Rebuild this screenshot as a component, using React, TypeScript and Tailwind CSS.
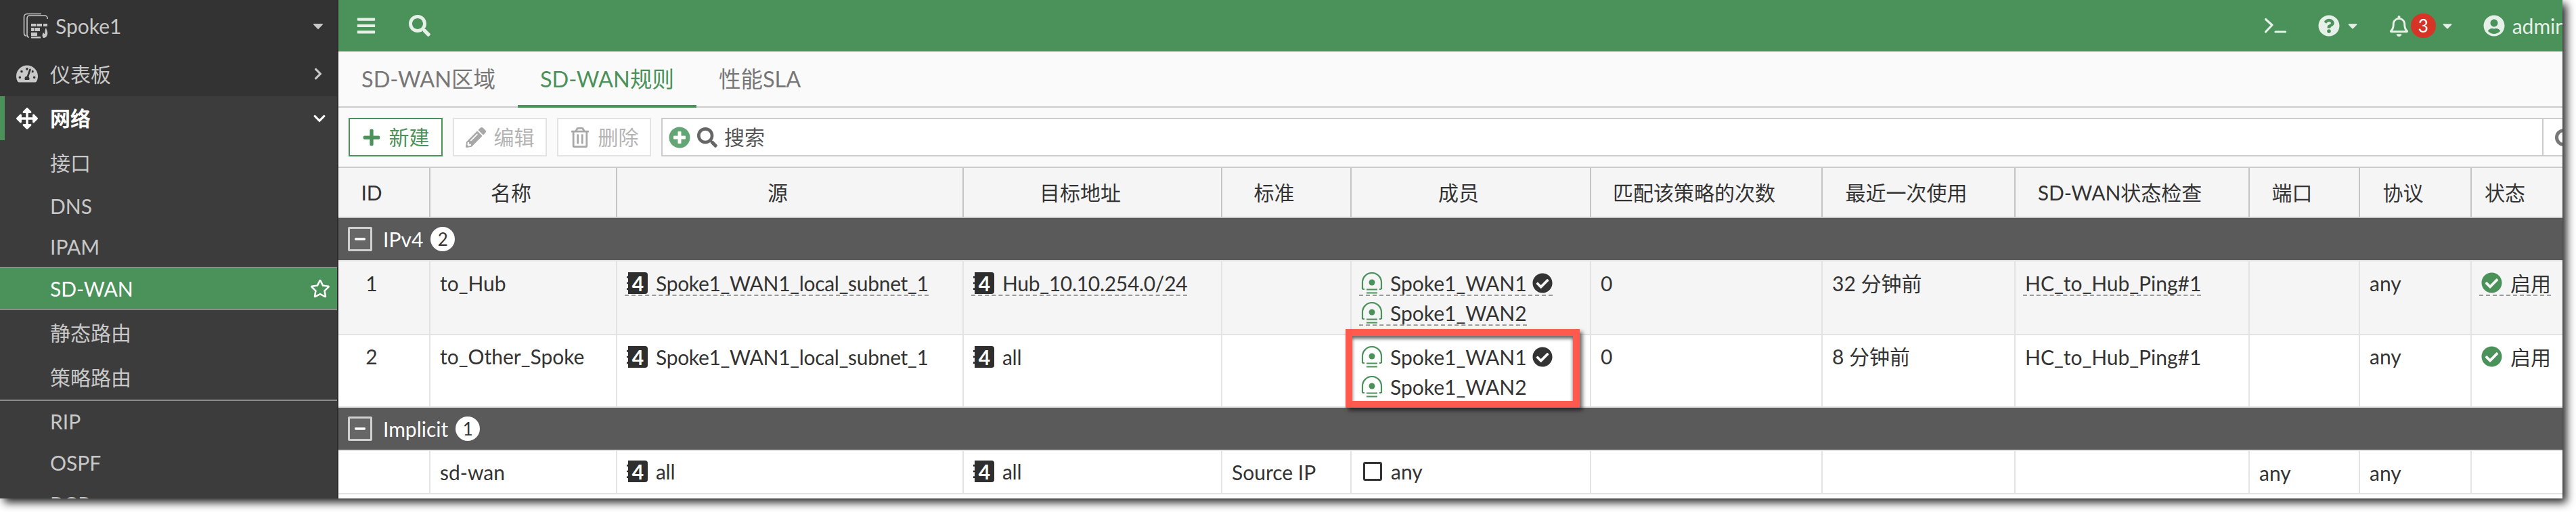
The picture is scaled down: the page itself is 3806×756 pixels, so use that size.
import type { ReactNode } from 'react';
import {
  FaArrowsAlt,
  FaBars,
  FaCaretDown,
  FaCheckCircle,
  FaChevronDown,
  FaChevronRight,
  FaMinus,
  FaPencilAlt,
  FaPlus,
  FaPlusCircle,
  FaQuestionCircle,
  FaRegBell,
  FaRegStar,
  FaRegTrashAlt,
  FaSearch,
  FaTachometerAlt,
  FaUserCircle,
} from 'react-icons/fa';

const columns = [
  { title: 'ID', width: 136 },
  { title: '名称', width: 276 },
  { title: '源', width: 512 },
  { title: '目标地址', width: 382 },
  { title: '标准', width: 191 },
  { title: '成员', width: 354 },
  { title: '匹配该策略的次数', width: 342 },
  { title: '最近一次使用', width: 285 },
  { title: 'SD-WAN状态检查', width: 346 },
  { title: '端口', width: 163 },
  { title: '协议', width: 165 },
  { title: '状态', width: 134 },
];

const DeviceIcon = () => (
  <svg viewBox="0 0 38 38" className="w-[38px] h-[38px] text-[#c8c8c8]" fill="none" stroke="currentColor" strokeWidth="1.6">
    <path d="M27 1.5H6a4.5 4.5 0 0 0-4.5 4.500V30a4 4 0 0 0 3 4" />
    <path d="M36 9V8a4 4 0 0 0-4-4H10a4 4 0 0 0-4 4v25a3 3 0 0 0 3 3" />
    <g fill="currentColor" stroke="none">
      <rect x="12" y="16" width="7" height="4" />
      <rect x="20" y="16" width="8" height="4" />
      <rect x="30" y="16" width="6" height="4" />
      <rect x="12" y="22" width="4" height="5" />
      <rect x="17" y="22" width="8" height="5" />
      <rect x="12" y="29" width="9" height="5" />
      <rect x="12" y="35" width="14" height="2.500" />
      <path d="M34 22c1 4 3 6 2 10-.6 3-3 5-6 5-2-2-2-5 0-8 1 1 1 2 2 2 1-3 0-6 2-9z" />
    </g>
  </svg>
);

const TerminalIcon = () => (
  <svg viewBox="0 0 32 22" className="w-8 h-[22px]" fill="none" stroke="currentColor" strokeWidth="3.200" strokeLinecap="round" strokeLinejoin="round">
    <path d="M1.500 1.500 11 10 1.500 20" />
    <path d="M16 20h14.500" />
  </svg>
);

const MemberIcon = () => (
  <svg viewBox="0 0 32 32" className="w-8 h-8 shrink-0" fill="none" stroke="#4a9259" strokeWidth="2.200">
    <path d="M2 25V15a14 14 0 0 1 28 0v10" />
    <path d="M2 25h3M27 25h3" />
    <circle cx="16" cy="15" r="4.500" fill="#4a9259" stroke="none" />
    <path d="M8 25.500h16M8 30.500h16" />
  </svg>
);

const AddressBadge = () => (
  <span className="w-[31px] h-8 mr-3 shrink-0 bg-[#2e2e2e] rounded-r-[4px] border-l-2 border-dashed border-l-white text-white font-bold text-[30px] leading-8 text-center">
    4
  </span>
);

const Dashed = ({ on, children }: { on?: boolean; children: ReactNode }) => (
  <div
    className={`flex w-fit items-center h-[37px] pl-[3px] border-b-2 border-dashed ${on ? 'border-[#9a9a9a]' : 'border-transparent'}`}
  >
    {children}
  </div>
);

const Address = ({ label, dashed }: { label: string; dashed?: boolean }) => (
  <Dashed on={dashed}>
    <AddressBadge />
    <span className="tracking-[-0.3px]">{label}</span>
  </Dashed>
);

const Member = ({ label, active, dashed }: { label: string; active?: boolean; dashed?: boolean }) => (
  <div className={active ? '' : 'mt-[7px]'}>
    <Dashed on={dashed}>
      <MemberIcon />
      <span className="ml-[11px]">{label}</span>
      {active && <FaCheckCircle className="ml-[8px] text-[#333] text-[30px]" />}
    </Dashed>
  </div>
);

const Enabled = ({ dashed }: { dashed?: boolean }) => (
  <Dashed on={dashed}>
    <FaCheckCircle className="mr-3 text-[#4a9259] text-[31px]" />
    启用
  </Dashed>
);

const MinusBox = () => (
  <span className="w-9 h-9 border-[3px] border-[#d0d0d0] bg-[#666] flex items-center justify-center rounded-[2px]">
    <FaMinus className="text-white text-[18px]" />
  </span>
);

const GroupRow = ({ name, count }: { name: string; count: number }) => (
  <tr>
    <td colSpan={12} className="h-16 bg-[#5a5a5a] border-b-2 border-[#e3e3e3] p-0">
      <div className="flex items-center pl-[14px] text-white">
        <MinusBox />
        <span className="ml-4">{name}</span>
        <span className="ml-[11px] w-9 h-9 rounded-full bg-white text-[#333] text-[26px] leading-9 text-center">{count}</span>
      </div>
    </td>
  </tr>
);

const Cell = ({ children, center, top = 'pt-[14px]' }: { children?: ReactNode; center?: boolean; top?: string }) => (
  <td
    className={`relative align-top ${top} border-r-2 border-b-2 border-[#e3e3e3] last:border-r-0 ${center ? 'text-center pr-[36px]' : 'pl-[11px]'}`}
  >
    {children}
  </td>
);

const SideItem = ({ label, className }: { label: string; className: string }) => (
  <div className={`flex items-center pl-[74px] text-[#c8c8c8] ${className}`}>{label}</div>
);

const Sidebar = () => (
  <aside className="w-[500px] shrink-0 bg-[#3c3c3c] border-r-2 border-[#2d2d2d] overflow-hidden text-[30px]">
    <div className="bg-[#333] text-[#c8c8c8]">
      <div className="h-[76px] flex items-center pl-[34px] pr-4">
        <DeviceIcon />
        <span className="ml-[10px] flex-1">Spoke1</span>
        <FaCaretDown className="text-[24px]" />
      </div>
      <div className="h-[66px] flex items-center pl-6 pr-[18px]">
        <FaTachometerAlt className="text-[32px]" />
        <span className="ml-[18px] flex-1">仪表板</span>
        <FaChevronRight className="text-[20px]" />
      </div>
    </div>
    <div className="h-[65px] flex items-center pl-6 pr-4 border-l-[7px] border-[#4a9259] text-white font-bold">
      <FaArrowsAlt className="text-[32px] -ml-[7px]" />
      <span className="ml-[18px] flex-1">网络</span>
      <FaChevronDown className="text-[20px]" />
    </div>
    <SideItem label="接口" className="h-[66px]" />
    <SideItem label="DNS" className="h-[62px]" />
    <SideItem label="IPAM" className="h-[59px]" />
    <div className="h-16 flex items-center pl-[74px] pr-[10px] bg-[#4a9259] border-y-2 border-[#8c8c8c] text-white">
      <span className="flex-1">SD-WAN</span>
      <FaRegStar className="text-[30px]" />
    </div>
    <SideItem label="静态路由" className="h-[66px]" />
    <SideItem label="策略路由" className="h-[66px]" />
    <div className="h-[2px] bg-[#8c8c8c]" />
    <SideItem label="RIP" className="h-[61px]" />
    <SideItem label="OSPF" className="h-[61px]" />
    <SideItem label="BGP" className="h-[61px]" />
  </aside>
);

const TopBar = () => (
  <header className="h-[76px] shrink-0 bg-[#4a9259] flex items-center pl-[26px] text-[#e6f0e8]">
    <FaBars className="text-[30px]" />
    <FaSearch className="ml-[48px] text-[32px]" />
    <div className="ml-auto flex items-center -mr-[6px]">
      <TerminalIcon />
      <FaQuestionCircle className="ml-[47px] text-[32px]" />
      <FaCaretDown className="ml-[8px] text-[22px]" />
      <FaRegBell className="ml-[42px] text-[31px]" />
      <span className="ml-[2px] w-[37px] h-9 rounded-full bg-[#d63427] text-white text-[26px] leading-9 text-center">3</span>
      <FaCaretDown className="ml-[6px] text-[22px]" />
      <FaUserCircle className="ml-[42px] text-[32px]" />
      <span className="ml-[11px] text-[30px]">admin</span>
    </div>
  </header>
);

const Tabs = () => (
  <nav className="h-[83px] shrink-0 bg-[#fafafa] border-b-2 border-[#cccccc] flex text-[32.5px] text-[#777] pl-px">
    <div className="px-[33px] pt-[17px]">SD-WAN区域</div>
    <div className="px-[33px] pt-[17px] h-[83px] border-b-4 border-[#4a9259] text-[#4a9259]">SD-WAN规则</div>
    <div className="px-[33px] pt-[17px]">性能SLA</div>
  </nav>
);

const ToolButton = ({ icon, label, primary }: { icon: ReactNode; label: string; primary?: boolean }) => (
  <button
    className={`w-[139px] h-[57px] flex items-center justify-center gap-[12px] bg-white border-2 text-[30px] ${primary ? 'border-[#4a9259] text-[#4a9259]' : 'border-[#e3e3e3] text-[#b4b4b4]'}`}
  >
    {icon}
    {label}
  </button>
);

const Toolbar = () => (
  <div className="h-[89px] shrink-0 bg-[#fafafa] border-b-2 border-[#cccccc] flex items-start pt-[15px] pl-[15px] gap-[15px] overflow-hidden">
    <ToolButton primary icon={<FaPlus className="text-[28px]" />} label="新建" />
    <ToolButton icon={<FaPencilAlt className="text-[30px] text-[#a8a8a8]" />} label="编辑" />
    <ToolButton icon={<FaRegTrashAlt className="text-[30px] text-[#a8a8a8]" />} label="删除" />
    <div className="flex-1 h-[57px] flex items-center bg-white border-2 border-[#cccccc] border-r-0 pl-[9px] text-[30px] text-[#555]">
      <FaPlusCircle className="text-[#63a574] text-[32px]" />
      <FaSearch className="ml-[10px] text-[#666] text-[30px]" />
      <span className="ml-[10px] flex-1">搜索</span>
      <span className="h-full w-[30px] shrink-0 border-l-2 border-[#cccccc] pl-[17px] flex items-center">
        <span className="w-[26px] h-[26px] shrink-0 rounded-full border-[5px] border-[#777]" />
      </span>
    </div>
  </div>
);

const RulesTable = () => (
  <table className="w-full table-fixed border-separate border-spacing-0 text-[30px] leading-[44px] text-[#333]">
    <colgroup>
      {columns.map((c) => (
        <col key={c.title} style={{ width: c.width }} />
      ))}
    </colgroup>
    <thead>
      <tr>
        {columns.map((c) => (
          <th
            key={c.title}
            className="h-[74px] p-0 pr-[36px] font-normal bg-[#f5f5f5] border-r-2 border-b-2 border-r-[#c4c4c4] border-b-[#c8c8c8] last:border-r-0"
          >
            {c.title}
          </th>
        ))}
      </tr>
    </thead>
    <tbody>
      <GroupRow name="IPv4" count={2} />
      <tr className="h-[109px] bg-[#f5f5f5]">
        <Cell center top="pt-[10px]">1</Cell>
        <Cell top="pt-[10px]"><span className="pl-[3px]">to_Hub</span></Cell>
        <Cell><Address label="Spoke1_WAN1_local_subnet_1" dashed /></Cell>
        <Cell><Address label="Hub_10.10.254.0/24" dashed /></Cell>
        <Cell />
        <Cell>
          <Member label="Spoke1_WAN1" active dashed />
          <Member label="Spoke1_WAN2" dashed />
        </Cell>
        <Cell top="pt-[10px]"><span className="pl-[3px]">0</span></Cell>
        <Cell top="pt-[10px]"><span className="pl-[3px]">32 分钟前</span></Cell>
        <Cell><Dashed on>HC_to_Hub_Ping#1</Dashed></Cell>
        <Cell />
        <Cell top="pt-[10px]"><span className="pl-[3px]">any</span></Cell>
        <Cell><Enabled dashed /></Cell>
      </tr>
      <tr className="h-[107px] bg-white">
        <Cell center top="pt-[9px]">2</Cell>
        <Cell top="pt-[9px]"><span className="pl-[3px]">to_Other_Spoke</span></Cell>
        <Cell><Address label="Spoke1_WAN1_local_subnet_1" /></Cell>
        <Cell><Address label="all" /></Cell>
        <Cell />
        <Cell>
          <Member label="Spoke1_WAN1" active />
          <Member label="Spoke1_WAN2" />
          {/* callout drawn over the member cell */}
          <div className="absolute -left-[9px] -top-[9px] w-[346px] h-[116px] border-[10px] border-[#ff5a4d] shadow-[4px_4px_6px_rgba(0,0,0,0.6),inset_0_4px_5px_rgba(0,0,0,0.6)]" />
        </Cell>
        <Cell top="pt-[9px]"><span className="pl-[3px]">0</span></Cell>
        <Cell top="pt-[9px]"><span className="pl-[3px]">8 分钟前</span></Cell>
        <Cell><Dashed>HC_to_Hub_Ping#1</Dashed></Cell>
        <Cell />
        <Cell top="pt-[9px]"><span className="pl-[3px]">any</span></Cell>
        <Cell><Enabled /></Cell>
      </tr>
      <GroupRow name="Implicit" count={1} />
      <tr className="h-16 bg-white">
        <Cell />
        <Cell top="pt-[9px]"><span className="pl-[3px]">sd-wan</span></Cell>
        <Cell top="pt-[12px]"><Address label="all" /></Cell>
        <Cell top="pt-[12px]"><Address label="all" /></Cell>
        <Cell top="pt-[9px]"><span className="pl-[3px]">Source IP</span></Cell>
        <Cell top="pt-[12px]">
          <Dashed>
            <span className="w-7 h-7 ml-[3px] mr-[13px] border-[3px] border-[#333] rounded-[3px]" />
            any
          </Dashed>
        </Cell>
        <Cell />
        <Cell />
        <Cell />
        <Cell top="pt-[10px]"><span className="pl-[3px]">any</span></Cell>
        <Cell top="pt-[10px]"><span className="pl-[3px]">any</span></Cell>
        <Cell />
      </tr>
    </tbody>
  </table>
);

const App = () => (
  <div className="w-[3806px] h-[756px] bg-white overflow-hidden [font-family:Lato,'Noto_Sans_CJK_SC',sans-serif]">
    <div className="w-[3786px] h-[736px] flex overflow-hidden shadow-[6px_6px_12px_rgba(0,0,0,0.85)]">
      <Sidebar />
      <main className="flex-1 min-w-0 flex flex-col bg-white overflow-hidden">
        <TopBar />
        <Tabs />
        <Toolbar />
        <RulesTable />
      </main>
    </div>
  </div>
);

export default App;
